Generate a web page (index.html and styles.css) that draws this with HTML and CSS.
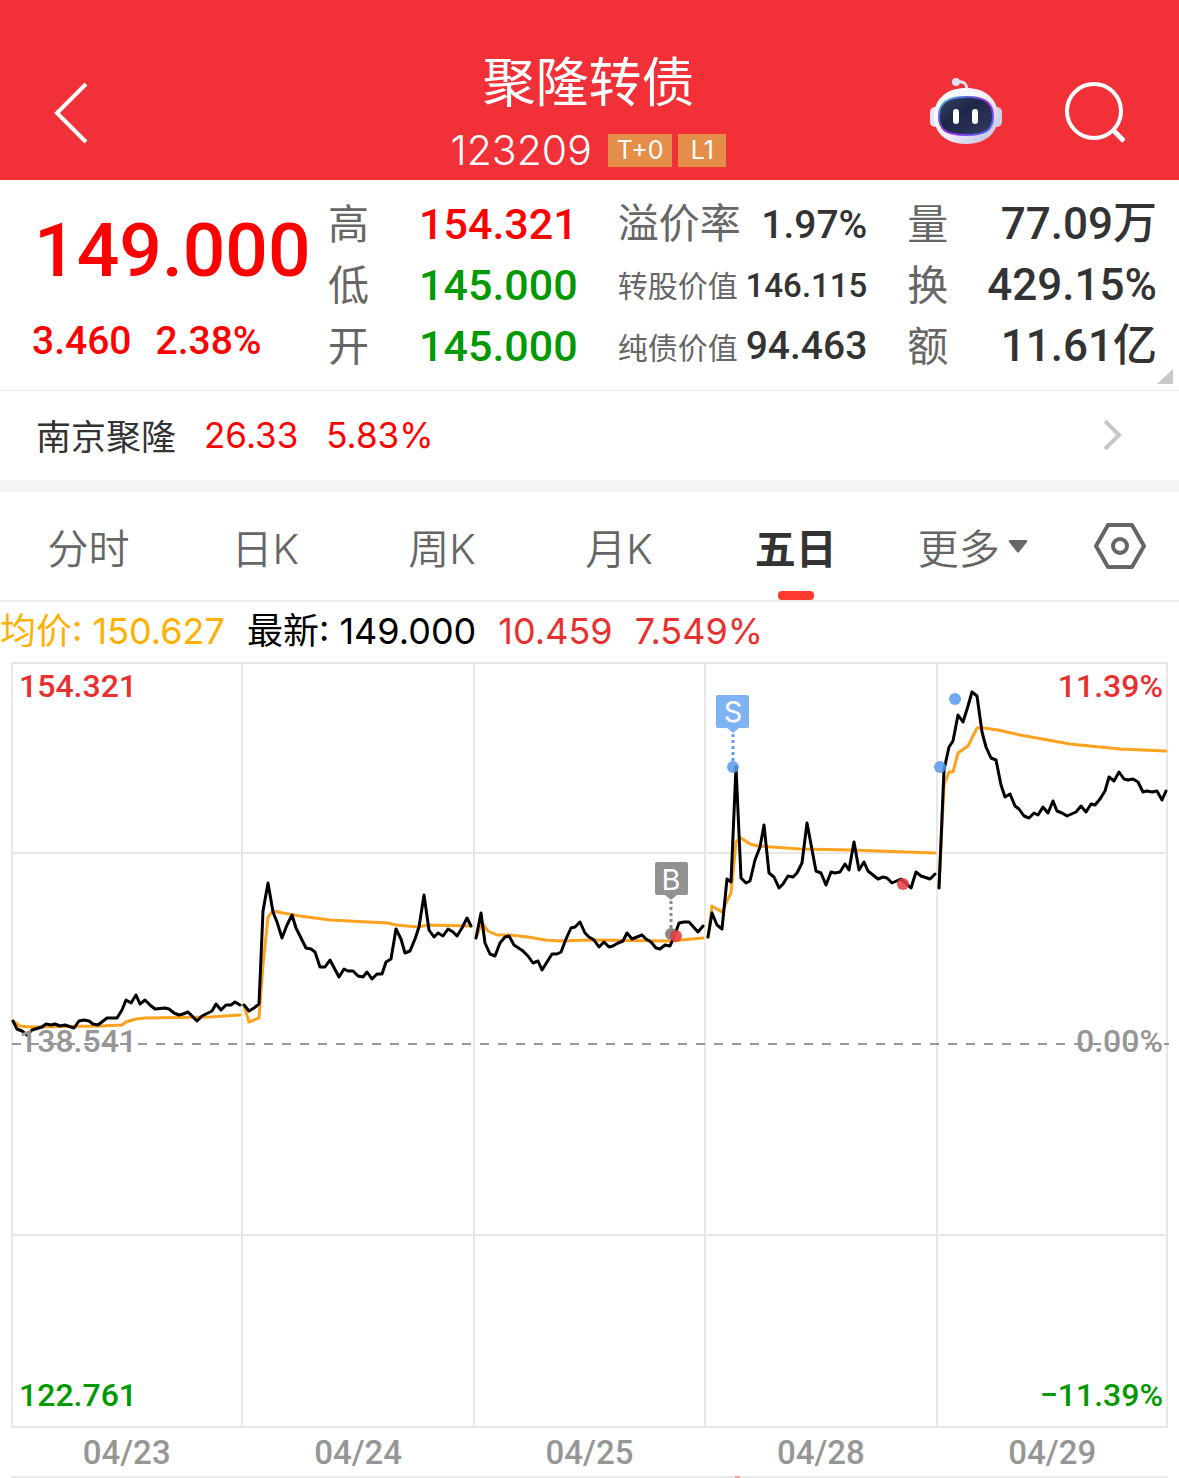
FILE: index.html
```html
<!DOCTYPE html>
<html lang="zh-CN">
<head>
    <meta charset="UTF-8">
    <meta name="viewport" content="width=device-width, initial-scale=1">
    <title>聚隆转债 123209</title>
    <link rel="stylesheet" href="styles.css">
</head>
<body>
    <header class="header">
        <button class="iconbtn back" aria-label="返回">
            <svg width="36" height="64" viewBox="0 0 36 64"><path d="M34 3L5 32L34 61" fill="none" stroke="#fff" stroke-width="4"/></svg>
        </button>
        <div class="title">
            <h1 class="name">聚隆转债</h1>
            <div class="code">
                <span>123209</span>
                <span class="tag">T+0</span>
                <span class="tag">L1</span>
            </div>
        </div>
        <div class="tools">
            <button class="iconbtn" aria-label="智能助手">
                <svg width="74" height="74" viewBox="0 0 74 74">
                    <defs>
                        <linearGradient id="shell" x1="0" y1="0" x2="1" y2="1">
                            <stop offset="0" stop-color="#fff"/>
                            <stop offset=".5" stop-color="#f3f2fc"/>
                            <stop offset="1" stop-color="#b9badf"/>
                        </linearGradient>
                        <linearGradient id="rim" x1="0" y1="0" x2="1" y2="1">
                            <stop offset="0" stop-color="#4fe3ee"/>
                            <stop offset=".3" stop-color="#5a50d8"/>
                            <stop offset=".55" stop-color="#a62be8"/>
                            <stop offset="1" stop-color="#3a6bff"/>
                        </linearGradient>
                        <linearGradient id="face" x1="0" y1="0" x2="1" y2="1">
                            <stop offset="0" stop-color="#3c4466"/>
                            <stop offset=".4" stop-color="#1c2748"/>
                            <stop offset="1" stop-color="#343a60"/>
                        </linearGradient>
                    </defs>
                    <path d="M28 6Q38 4 38 15" fill="none" stroke="#e6e6f5" stroke-width="3"/>
                    <circle cx="27" cy="6" r="4" fill="#dfe0f3"/>
                    <rect x="1" y="31" width="10" height="20" rx="5" fill="#e4e4f4"/>
                    <rect x="62" y="31" width="11" height="20" rx="5" fill="#cfd0ea"/>
                    <path d="M37 12C55 12 69 22 69 40C69 57 57 68 37 68C17 68 5 57 5 40C5 22 19 12 37 12Z" fill="url(#shell)"/>
                    <path d="M37 21C55 21 64 26 64 40C64 54 57 59 37 59C17 59 10 54 10 40C10 26 19 21 37 21Z" fill="url(#face)" stroke="url(#rim)" stroke-width="2"/>
                    <rect x="24" y="33" width="6" height="15" rx="3" fill="#fff"/>
                    <rect x="43" y="33" width="6" height="15" rx="3" fill="#fff"/>
                </svg>
            </button>
            <button class="iconbtn" aria-label="搜索">
                <svg width="62" height="62" viewBox="0 0 62 62"><circle cx="31" cy="29" r="27" fill="none" stroke="#fff" stroke-width="4"/><path d="M50 48L61 59" stroke="#fff" stroke-width="5"/></svg>
            </button>
        </div>
    </header>

    <section class="quote">
        <div class="price">
            <div class="last">149.000</div>
            <div class="change"><span>3.460</span><span>2.38%</span></div>
        </div>
        <div class="stats">
            <dl class="stat"><dt>高</dt><dd class="red">154.321</dd></dl>
            <dl class="stat"><dt>溢价率</dt><dd class="mid">1.97%</dd></dl>
            <dl class="stat"><dt>量</dt><dd>77.09万</dd></dl>
            <dl class="stat"><dt>低</dt><dd class="green">145.000</dd></dl>
            <dl class="stat"><dt class="small">转股价值</dt><dd class="small">146.115</dd></dl>
            <dl class="stat"><dt>换</dt><dd>429.15%</dd></dl>
            <dl class="stat"><dt>开</dt><dd class="green">145.000</dd></dl>
            <dl class="stat"><dt class="small">纯债价值</dt><dd class="mid">94.463</dd></dl>
            <dl class="stat"><dt>额</dt><dd>11.61亿</dd></dl>
        </div>
        <svg class="corner" width="16" height="16" viewBox="0 0 16 16"><path d="M16 0V15H0Z" fill="#c8c8c8"/></svg>
    </section>

    <a class="stock" href="#">
        <span class="stockname">南京聚隆</span>
        <span class="red">26.33</span>
        <span class="red">5.83%</span>
        <svg class="arrow" width="22" height="32" viewBox="0 0 22 32"><path d="M4 2L18 16L4 30" fill="none" stroke="#c8c8c8" stroke-width="4"/></svg>
    </a>

    <nav class="tabs">
        <button class="tab">分时</button>
        <button class="tab">日K</button>
        <button class="tab">周K</button>
        <button class="tab">月K</button>
        <button class="tab active">五日</button>
        <button class="tab">更多<svg class="caret" width="20" height="14" viewBox="0 0 20 14"><path d="M2 1H18Q20 1 19 3L11 13Q10 14 9 13L1 3Q0 1 2 1Z" fill="#666"/></svg></button>
        <button class="tab setting" aria-label="设置">
            <svg width="52" height="46" viewBox="0 0 52 46"><path d="M14 2H38L50 23L38 44H14L2 23Z" fill="none" stroke="#666" stroke-width="4" stroke-linejoin="round"/><circle cx="26" cy="23" r="7" fill="none" stroke="#666" stroke-width="4"/></svg>
        </button>
    </nav>

    <div class="legend">
        <span class="avg">均价: 150.627</span>
        <span>最新: 149.000</span>
        <span class="rise">10.459</span>
        <span class="rise">7.549%</span>
    </div>

    <svg class="chart" viewBox="0 661 1179 768" role="img" aria-label="五日走势">
        <!-- grid -->
        <g fill="none" stroke="#e8e8e8" stroke-width="2">
            <rect x="12" y="663" width="1155" height="764"/>
            <path d="M242 663V1427M474 663V1427M705 663V1427M937 663V1427M12 853H1167M12 1235H1167"/>
        </g>
        <path d="M12 1044H1169" stroke="#777" stroke-width="1.5" stroke-dasharray="9 9"/>

        <!-- average -->
        <g class="line" stroke="#ffa21f">
            <polyline points="13,1021 20,1026 30,1027 100,1026 122,1025 126,1022 136,1019 145,1018 210,1017 240,1015"/>
            <polyline points="244,1005 249,1022 259,1018 263,965 268,917 273,911 283,913 300,916 330,920 388,923 396,925 418,927 428,925 471,926"/>
            <polyline points="476,938 482,923 488,931 497,935 510,935 528,937 545,940 560,941 590,940 670,941 703,938"/>
            <polyline points="708,937 712,906 722,912 727,901 731,893 736,842 741,838 750,844 758,846 800,849 850,850 935,853"/>
            <polyline points="939,888 944,785 949,772 953,772 958,753 968,746 977,728 984,728 998,730 1020,735 1070,744 1120,749 1166,751"/>
        </g>

        <!-- price -->
        <g class="line" stroke="#000">
            <polyline points="13,1021 17,1029 22,1031 27,1035 32,1030 42,1027 46,1024 51,1025 55,1024 60,1026 65,1025 74,1028 79,1021 84,1020 89,1021 93,1024 98,1025 107,1018 117,1018 122,1010 126,1000 131,1003 136,995 140,1004 145,1000 150,1005 155,1009 165,1008 169,1009 174,1013 179,1015 183,1014 188,1012 197,1021 202,1016 212,1011 216,1004 221,1010 226,1005 231,1005 235,1002 240,1005"/>
            <polyline points="244,1005 249,1011 254,1008 259,1004 263,911 268,883 273,912 277,922 282,938 287,925 292,915 296,928 306,948 311,949 315,952 320,967 325,967 330,960 339,977 344,969 348,971 353,971 358,976 363,977 367,972 372,979 377,974 382,974 386,962 391,959 396,929 401,939 405,953 410,951 415,939 419,927 424,895 429,930 434,937 438,933 443,936 448,929 453,932 457,936 462,928 467,918 471,926"/>
            <polyline points="476,938 481,913 485,943 490,954 495,956 500,943 505,937 509,936 514,945 523,951 528,956 533,963 538,961 542,970 552,954 557,954 561,952 566,939 571,928 575,927 580,922 585,933 589,937 594,940 599,947 604,942 609,947 613,946 618,943 623,941 627,933 632,939 642,935 646,939 651,942 656,948 660,949 665,945 670,946 674,937 679,923 684,922 689,922 698,932 703,926"/>
            <polyline points="708,937 712,913 717,925 722,929 727,879 731,882 736,767 741,878 746,883 750,881 755,860 760,847 764,825 769,873 774,877 779,888 783,884 788,876 793,877 797,873 802,863 807,823 816,871 821,873 826,885 831,872 835,873 840,872 845,864 849,870 854,842 859,870 864,862 868,871 878,879 883,877 887,878 892,883 901,879 911,888 916,872 921,876 930,879 935,874"/>
            <polyline points="939,888 944,770 949,747 953,741 958,715 963,722 968,706 972,692 977,696 982,732 986,747 991,758 996,760 1001,785 1005,797 1010,794 1015,806 1019,809 1024,816 1029,818 1034,813 1038,815 1043,807 1048,813 1053,801 1057,811 1062,813 1067,816 1076,812 1081,806 1086,812 1091,804 1095,805 1100,799 1105,791 1109,777 1114,781 1119,772 1124,779 1128,780 1133,779 1138,782 1143,792 1147,791 1152,792 1157,791 1162,800 1166,791"/>
        </g>

        <!-- trade marks -->
        <g fill="#5599ee" fill-opacity=".85">
            <circle cx="733" cy="767" r="6"/>
            <circle cx="940" cy="767" r="6"/>
            <circle cx="955" cy="699" r="6"/>
        </g>
        <path d="M733 734V762" stroke="#5f9ff0" stroke-width="3" stroke-dasharray="3 3"/>
        <path d="M718 695H747Q749 695 749 697V726Q749 728 747 728H739L733 733L727 728H718Q716 728 716 726V697Q716 695 718 695Z" fill="#7db2f5"/>
        <text class="mark" x="733" y="722">S</text>

        <circle cx="671" cy="934" r="6" fill="#888"/>
        <path d="M671 901V930" stroke="#888" stroke-width="3" stroke-dasharray="3 3"/>
        <path d="M657 862H686Q688 862 688 864V893Q688 895 686 895H677L671 900L665 895H657Q655 895 655 893V864Q655 862 657 862Z" fill="#929292"/>
        <text class="mark" x="671" y="890">B</text>
        <g fill="#e83a40" fill-opacity=".85">
            <circle cx="676" cy="936" r="6"/>
            <circle cx="903" cy="884" r="6"/>
        </g>

        <!-- scale -->
        <g class="scale">
            <text x="19" y="697" fill="#e93030">154.321</text>
            <text x="19" y="1052" fill="#969696">138.541</text>
            <text x="19" y="1406" fill="#009900">122.761</text>
            <g text-anchor="end">
                <text x="1163" y="697" fill="#e93030">11.39%</text>
                <text x="1163" y="1052" fill="#969696">0.00%</text>
                <text x="1163" y="1406" fill="#009900">−11.39%</text>
            </g>
        </g>
    </svg>

    <div class="dates">
        <span>04/23</span>
        <span>04/24</span>
        <span>04/25</span>
        <span>04/28</span>
        <span>04/29</span>
    </div>
    <svg class="chart" viewBox="0 0 1179 2"><path d="M11 1H1168" stroke="#e8e8e8" stroke-width="2"/><path d="M735 1H740" stroke="#f7a0a0" stroke-width="2"/></svg>
</body>
</html>
```
FILE: styles.css
```css
* {
    box-sizing: border-box;
}

body {
    margin: 0;
    background: #fff;
    color: #333;
    font-family: Inter, "Noto Sans CJK SC", sans-serif;
    font-size: 36px;
}

button {
    padding: 0;
    border: none;
    background: none;
    font: inherit;
    color: inherit;
    cursor: pointer;
}

svg {
    display: block;
}

.red {
    color: #ff0000;
}

.green {
    color: #009900;
}

/* header */
.header {
    display: grid;
    grid-template-columns: 1fr auto 1fr;
    align-items: center;
    height: 180px;
    padding: 46px 54px 0 52px;
    background: #f23037;
    color: #fff;
}

.back {
    justify-self: start;
}

.title {
    text-align: center;
}

.name {
    margin: 0;
    font-size: 53px;
    font-weight: 400;
    line-height: 74px;
}

.code {
    display: flex;
    align-items: center;
    justify-content: center;
    gap: 6px;
    height: 60px;
    font-size: 41px;
    font-weight: 300;
}

.code span:first-child {
    margin-right: 10px;
}

.tag {
    min-width: 48px;
    padding: 0 9px;
    background: #e48e4a;
    font-size: 25px;
    font-weight: 400;
    line-height: 33px;
}

.tools {
    display: flex;
    align-items: center;
    justify-content: flex-end;
    gap: 60px;
}

/* quote */
.quote {
    position: relative;
    display: flex;
    padding: 14px 22px 13px 32px;
    border-bottom: 1px solid #ebebeb;
    font-family: Roboto, "Noto Sans CJK SC", sans-serif;
}

.price {
    flex: 296;
    color: #ff0000;
    font-weight: 500;
}

.last {
    padding-left: 2px;
    font-size: 75px;
    line-height: 112px;
}

.change {
    display: flex;
    gap: 24px;
    font-size: 39px;
    line-height: 70px;
}

.stats {
    flex: 829;
    display: grid;
    grid-template-columns: repeat(3, 1fr);
    grid-auto-rows: 61px;
    column-gap: 40px;
}

.stat {
    display: flex;
    align-items: baseline;
    justify-content: space-between;
    margin: 0;
    line-height: 61px;
    white-space: nowrap;
}

.stat dt {
    color: #666;
    font-size: 41px;
}

.stat dd {
    margin: 0;
    font-size: 44px;
    font-weight: 500;
}

.stat .red,
.stat .green {
    font-size: 43px;
}

.stat .mid {
    font-size: 39px;
}

.stat dt.small {
    font-size: 30px;
}

.stat dd.small {
    font-size: 33px;
}

.corner {
    position: absolute;
    right: 6px;
    bottom: 5px;
}

/* stock */
.stock {
    display: flex;
    align-items: center;
    gap: 28px;
    height: 101px;
    padding: 0 56px 2px 36px;
    border-bottom: 12px solid #f4f4f4;
    font-size: 35px;
    text-decoration: none;
}

.stockname {
    color: #333;
}

.arrow {
    margin-left: auto;
}

/* tabs */
.tabs {
    display: flex;
    height: 110px;
    border-bottom: 2px solid #ebebeb;
}

.tab {
    flex: 3;
    display: flex;
    align-items: center;
    justify-content: center;
    position: relative;
    color: #666;
    font-size: 41px;
    font-weight: 350;
}

.active {
    color: #333;
    font-weight: 700;
}

.active::after {
    content: "";
    position: absolute;
    left: 50%;
    bottom: 0;
    width: 36px;
    height: 9px;
    margin-left: -18px;
    border-radius: 4px;
    background: #ff3b30;
}

.caret {
    margin-left: 8px;
}

.setting {
    flex: 2;
}

/* chart */
.legend {
    display: flex;
    gap: 22px;
    color: #000;
    line-height: 59px;
    white-space: nowrap;
}

.avg {
    color: #ffb000;
}

.rise {
    color: #e93030;
}

.chart {
    width: 100%;
    height: auto;
}

.line {
    fill: none;
    stroke-width: 3;
    stroke-linejoin: round;
    stroke-linecap: round;
}

.mark {
    fill: #fff;
    font-size: 29px;
    text-anchor: middle;
}

.scale {
    font-family: Roboto, sans-serif;
    font-size: 32px;
    font-weight: 500;
}

.dates {
    display: grid;
    grid-template-columns: repeat(5, 1fr);
    padding: 0 11px;
    color: #969696;
    font-family: Roboto, sans-serif;
    font-size: 33px;
    font-weight: 500;
    line-height: 47px;
    text-align: center;
}
```
